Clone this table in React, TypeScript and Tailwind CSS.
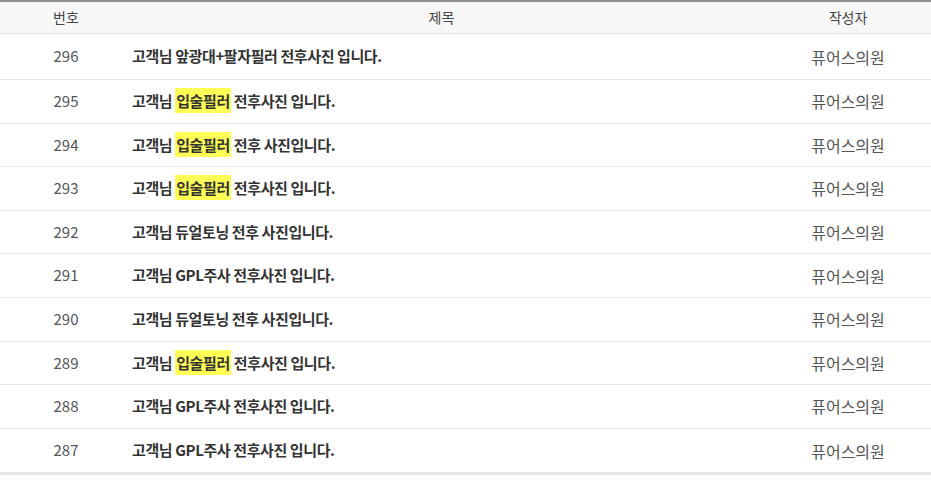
import React from "react";

interface Post {
  no: number;
  pre: string;
  mark?: string;
  post: string;
  author: string;
}

const posts: Post[] = [
  { no: 296, pre: "고객님 앞광대+팔자필러 전후사진 입니다.", post: "", author: "퓨어스의원" },
  { no: 295, pre: "고객님 ", mark: "입술필러", post: " 전후사진 입니다.", author: "퓨어스의원" },
  { no: 294, pre: "고객님 ", mark: "입술필러", post: " 전후 사진입니다.", author: "퓨어스의원" },
  { no: 293, pre: "고객님 ", mark: "입술필러", post: " 전후사진 입니다.", author: "퓨어스의원" },
  { no: 292, pre: "고객님 듀얼토닝 전후 사진입니다.", post: "", author: "퓨어스의원" },
  { no: 291, pre: "고객님 GPL주사 전후사진 입니다.", post: "", author: "퓨어스의원" },
  { no: 290, pre: "고객님 듀얼토닝 전후 사진입니다.", post: "", author: "퓨어스의원" },
  { no: 289, pre: "고객님 ", mark: "입술필러", post: " 전후사진 입니다.", author: "퓨어스의원" },
  { no: 288, pre: "고객님 GPL주사 전후사진 입니다.", post: "", author: "퓨어스의원" },
  { no: 287, pre: "고객님 GPL주사 전후사진 입니다.", post: "", author: "퓨어스의원" },
];

export default function App() {
  return (
    <div
      className="w-[931px] h-[483px] bg-white text-[14px]"
      style={{ fontFamily: '"Noto Sans CJK KR", "Noto Sans", sans-serif' }}
    >
      {/* Header */}
      <div className="grid grid-cols-[132px_1fr_166px] h-[34px] items-center border-t-2 border-t-[#8f8f8f] border-b border-b-[#e6e6e6] bg-[#f7f7f7] text-[#444]">
        <div className="text-center">번호</div>
        <div className="text-center pr-[14px]">제목</div>
        <div className="text-center">작성자</div>
      </div>

      {/* Rows */}
      <div className="border-b-[3px] border-b-[#e6e6e6]">
        {posts.map((p, i) => (
          <div
            key={p.no}
            className={`grid grid-cols-[132px_1fr_166px] items-center border-b border-b-[#e6e6e6] last:border-b-0 ${
              i === 0 ? "h-[46px]" : "h-[43.6px]"
            }`}
          >
            <div className="text-center text-[15px] text-[#555]">{p.no}</div>
            <div className="font-bold text-[15px] text-[#333] tracking-[-0.4px]">
              {p.pre}
              {p.mark && (
                <span className="bg-[#ffff55] px-[1px] py-[2px]">{p.mark}</span>
              )}
              {p.post}
            </div>
            <div className="text-center text-[16px] text-[#555]">{p.author}</div>
          </div>
        ))}
      </div>
    </div>
  );
}
